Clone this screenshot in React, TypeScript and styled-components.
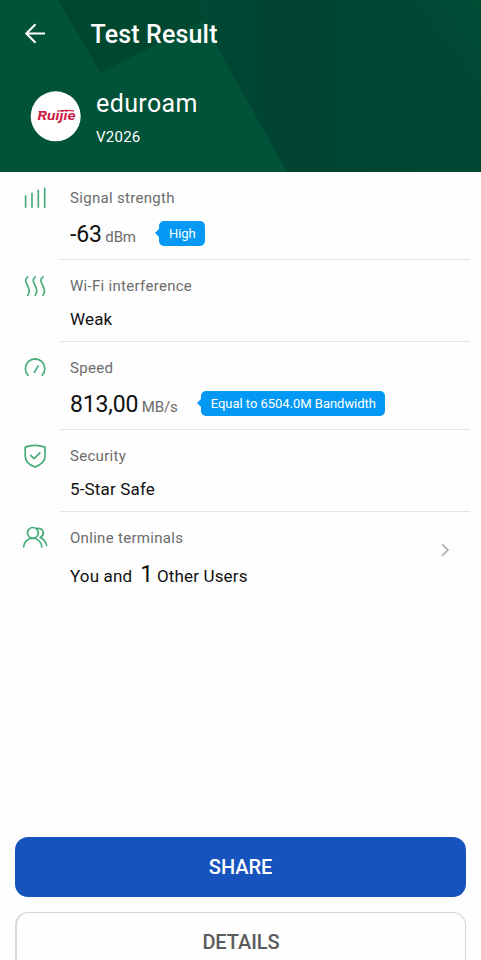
import React from "react";
import styled, { createGlobalStyle } from "styled-components";

const GlobalStyle = createGlobalStyle`
  * { box-sizing: border-box; }
  html, body { margin: 0; padding: 0; background: #fff; overflow: hidden; }
`;

const Screen = styled.main`
  display: flex;
  flex-direction: column;
  width: 481px;
  height: 960px;
  overflow: hidden;
  background: #fefefe;
  font-family: Roboto, sans-serif;
  color: #111;
  white-space: nowrap;
`;

const Header = styled.header`
  position: relative;
  flex: none;
  height: 172px;
  background: #005238;
  color: #fff;
`;

const Facets = styled.svg`
  position: absolute;
  inset: 0;
`;

const TitleBar = styled.div`
  position: relative;
  display: flex;
  align-items: center;
  gap: 43.5px;
  height: 68px;
  padding-left: 23px;
`;

const Title = styled.h1`
  margin: 2px 0 0;
  font-size: 25px;
  line-height: 30px;
  font-weight: 500;
  letter-spacing: 0.15px;
`;

const Network = styled.div`
  position: relative;
  display: flex;
  gap: 15px;
  padding: 21px 0 0 30px;
`;

const NetworkLogo = styled.svg`
  margin-top: 1px;
`;

const NetworkName = styled.div`
  font-size: 25px;
  line-height: 30px;
  letter-spacing: 0.4px;
`;

const Device = styled.div`
  margin-top: 8px;
  font-size: 15px;
  line-height: 20px;
  letter-spacing: 0.25px;
`;

const Row = styled.section<{ $tall?: boolean }>`
  display: flex;
  flex: none;
  height: ${(p) => (p.$tall ? 88 : 82)}px;
  margin-right: 11px;

  > svg {
    flex: none;
    margin: 12px 11px 0 21px;
  }
`;

const RowBody = styled.div<{ $last?: boolean }>`
  display: flex;
  flex: 1;
  justify-content: space-between;
  align-items: center;
  padding-left: 10px;
  border-bottom: ${(p) => (p.$last ? "none" : "1px solid #e4e4e4")};
`;

const RowText = styled.div`
  align-self: flex-start;
  padding-top: 16px;
`;

const Label = styled.div`
  font-size: 15px;
  line-height: 20px;
  letter-spacing: 0.3px;
  color: #6c6c6c;
`;

const Reading = styled.div`
  display: flex;
  align-items: center;
  height: 30px;
  margin-top: 11px;
`;

const Figure = styled.span`
  margin-top: 2px;
  font-size: 23px;
  line-height: 30px;
  letter-spacing: -0.15px;
`;

const Unit = styled.span`
  font-size: 15px;
  line-height: 20px;
  letter-spacing: -0.1px;
  margin: 6px 23px 0 3.5px;
  color: #6c6c6c;
`;

const Tag = styled.span`
  position: relative;
  height: 25px;
  margin-top: -1px;
  padding: 0 9.5px 0 10px;
  border-radius: 5px;
  background: #0498f5;
  color: #fff;
  font-size: 13px;
  line-height: 25px;
  letter-spacing: -0.03px;

  &::before {
    content: "";
    position: absolute;
    left: -4px;
    top: 8px;
    border: 4px solid transparent;
    border-left: 0;
    border-right-color: #0498f5;
  }
`;

const Phrase = styled.div`
  margin-top: 13px;
  font-size: 17px;
  line-height: 20px;
  letter-spacing: 0.16px;
`;

const Users = styled.div`
  display: flex;
  align-items: baseline;
  margin-top: 12px;
  font-size: 17px;
  line-height: 30px;
  letter-spacing: 0.16px;
`;

const Count = styled.span`
  margin: 0 3.5px 0 8px;
  font-size: 23px;
`;

const Actions = styled.footer`
  display: flex;
  flex: none;
  flex-direction: column;
  gap: 15px;
  margin-top: auto;
  padding: 0 15px;
  height: 123px;
`;

const Action = styled.button<{ $primary?: boolean }>`
  flex: none;
  height: 60px;
  width: 451px;
  padding: 0;
  border: ${(p) => (p.$primary ? "0" : "solid #d6d7d9")};
  border-width: ${(p) => (p.$primary ? "0" : "1px 1px 1px 2px")};
  border-radius: 13px;
  background: ${(p) => (p.$primary ? "#1653bd" : "#fefefe")};
  color: ${(p) => (p.$primary ? "#fff" : "#5b5b5b")};
  font: 500 20px/24px Roboto, sans-serif;
  letter-spacing: -0.06px;
`;

const LineIcon = styled.svg`
  fill: none;
  stroke: #43aa78;
  stroke-width: 1.65;
  stroke-linecap: round;
  stroke-linejoin: round;
`;

const Chevron = styled.svg`
  flex: none;
  margin: -13px 19px 0 0;
  fill: none;
  stroke: #b4b4b4;
  stroke-width: 1.8;
`;

const iconProps = { width: 28, height: 28, viewBox: "0 0 28 28" };

const SignalIcon = () => (
  <LineIcon {...iconProps}>
    <path d="M4.6 11.7V23.2M11 9.2V23.2M17.3 6.2V23.2M23.7 4.2V23.2" />
  </LineIcon>
);

const WavesIcon = () => (
  <LineIcon {...iconProps}>
    {[0, 7.6, 15.3].map((x) => (
      <path key={x} transform={`translate(${x} 0)`} d="M6.9 4.9C3.9 6.6 4.1 9.4 6 12.5C8.5 16.7 9.2 20.2 6.6 23.4" />
    ))}
  </LineIcon>
);

const GaugeIcon = () => (
  <LineIcon {...iconProps}>
    <path d="M7.1 21.3A9.7 9.7 0 1 1 21.1 21.3M17.2 11.8L13.3 18.3" />
  </LineIcon>
);

const ShieldIcon = () => (
  <LineIcon {...iconProps}>
    <path d="M14 3.4C17.3 3.4 20.7 4 24 5.1V14.2C24 19.3 20.4 22.5 14 25C7.6 22.5 4.2 19.3 4.2 14.2V5.1C7.3 4 10.7 3.4 14 3.4Z" />
    <path d="M9.7 13.4L13 16.7L18.9 10.9" />
  </LineIcon>
);

const UsersIcon = () => (
  <LineIcon {...iconProps}>
    <circle cx="11.9" cy="8.9" r="5.4" />
    <path d="M2.6 22.9C3.1 17.8 7 14.3 11.8 14.3C16.6 14.3 20.4 17.9 20.9 22.9M16.2 4.4C20 4 22.5 6.2 22.3 9.1C22.2 11.2 21 12.6 19.1 13.4C22.8 14.8 24.8 17.6 25.6 21.3" />
  </LineIcon>
);

export default function App() {
  return (
    <>
      <GlobalStyle />
      <Screen>
        <Header>
          <Facets width="481" height="172" viewBox="0 0 481 172">
            <defs>
              <linearGradient id="deep" x1="0" y1="0" x2="1" y2="0">
                <stop offset="0" stopColor="#004a34" />
                <stop offset="0.3" stopColor="#004431" />
                <stop offset="1" stopColor="#004834" />
              </linearGradient>
              <linearGradient id="corner" x1="0" y1="1" x2="1" y2="0">
                <stop offset="0.4" stopColor="#004d36" stopOpacity="0" />
                <stop offset="1" stopColor="#004d36" />
              </linearGradient>
            </defs>
            <path fill="#005238" d="M0 0H481V172H0Z" />
            <path fill="url(#deep)" d="M190 0H481V172H287L202 20Z" />
            <path fill="#00472f" d="M58 0H192L204 20L101 73Z" />
            <path fill="url(#corner)" d="M400 0H481V90Z" />
          </Facets>
          <TitleBar>
            <svg width="24" height="24" viewBox="0 0 24 24" fill="none" stroke="#fff" strokeWidth="2.1">
              <path d="M22 11.5H3.5M12.5 2.3L3.3 11.5L12.5 20.7" />
            </svg>
            <Title>Test Result</Title>
          </TitleBar>
          <Network>
            <NetworkLogo width="51" height="52" viewBox="0 0 51 52">
              <circle cx="25.7" cy="26.3" r="25" fill="#fff" />
              <text x="7.5" y="29.8" textLength="38" lengthAdjust="spacingAndGlyphs" fontFamily="Roboto, sans-serif" fontWeight="700" fontStyle="italic" fontSize="12" fill="#cc1f48">Ruijie</text>
              <path d="M8.5 21.6H16M30 21.2C34 20.2 39 20.2 44 20.9" fill="none" stroke="#cc1f48" strokeWidth="1.2" />
            </NetworkLogo>
            <div>
              <NetworkName>eduroam</NetworkName>
              <Device>V2026</Device>
            </div>
          </Network>
        </Header>

        <Row $tall>
          <SignalIcon />
          <RowBody>
            <RowText>
              <Label>Signal strength</Label>
              <Reading>
                <Figure>-63</Figure>
                <Unit>dBm</Unit>
                <Tag>High</Tag>
              </Reading>
            </RowText>
          </RowBody>
        </Row>
        <Row>
          <WavesIcon />
          <RowBody>
            <RowText>
              <Label>Wi-Fi interference</Label>
              <Phrase>Weak</Phrase>
            </RowText>
          </RowBody>
        </Row>
        <Row $tall>
          <GaugeIcon />
          <RowBody>
            <RowText>
              <Label>Speed</Label>
              <Reading>
                <Figure>813,00</Figure>
                <Unit>MB/s</Unit>
                <Tag>Equal to 6504.0M Bandwidth</Tag>
              </Reading>
            </RowText>
          </RowBody>
        </Row>
        <Row>
          <ShieldIcon />
          <RowBody>
            <RowText>
              <Label>Security</Label>
              <Phrase>5-Star Safe</Phrase>
            </RowText>
          </RowBody>
        </Row>
        <Row $tall>
          <UsersIcon />
          <RowBody $last>
            <RowText>
              <Label>Online terminals</Label>
              <Users>
                You and
                <Count>1</Count>
                Other Users
              </Users>
            </RowText>
            <Chevron width="12" height="16" viewBox="0 0 12 16">
              <path d="M3 2.2L8.9 8L3 13.8" />
            </Chevron>
          </RowBody>
        </Row>

        <Actions>
          <Action $primary>SHARE</Action>
          <Action>DETAILS</Action>
        </Actions>
      </Screen>
    </>
  );
}
